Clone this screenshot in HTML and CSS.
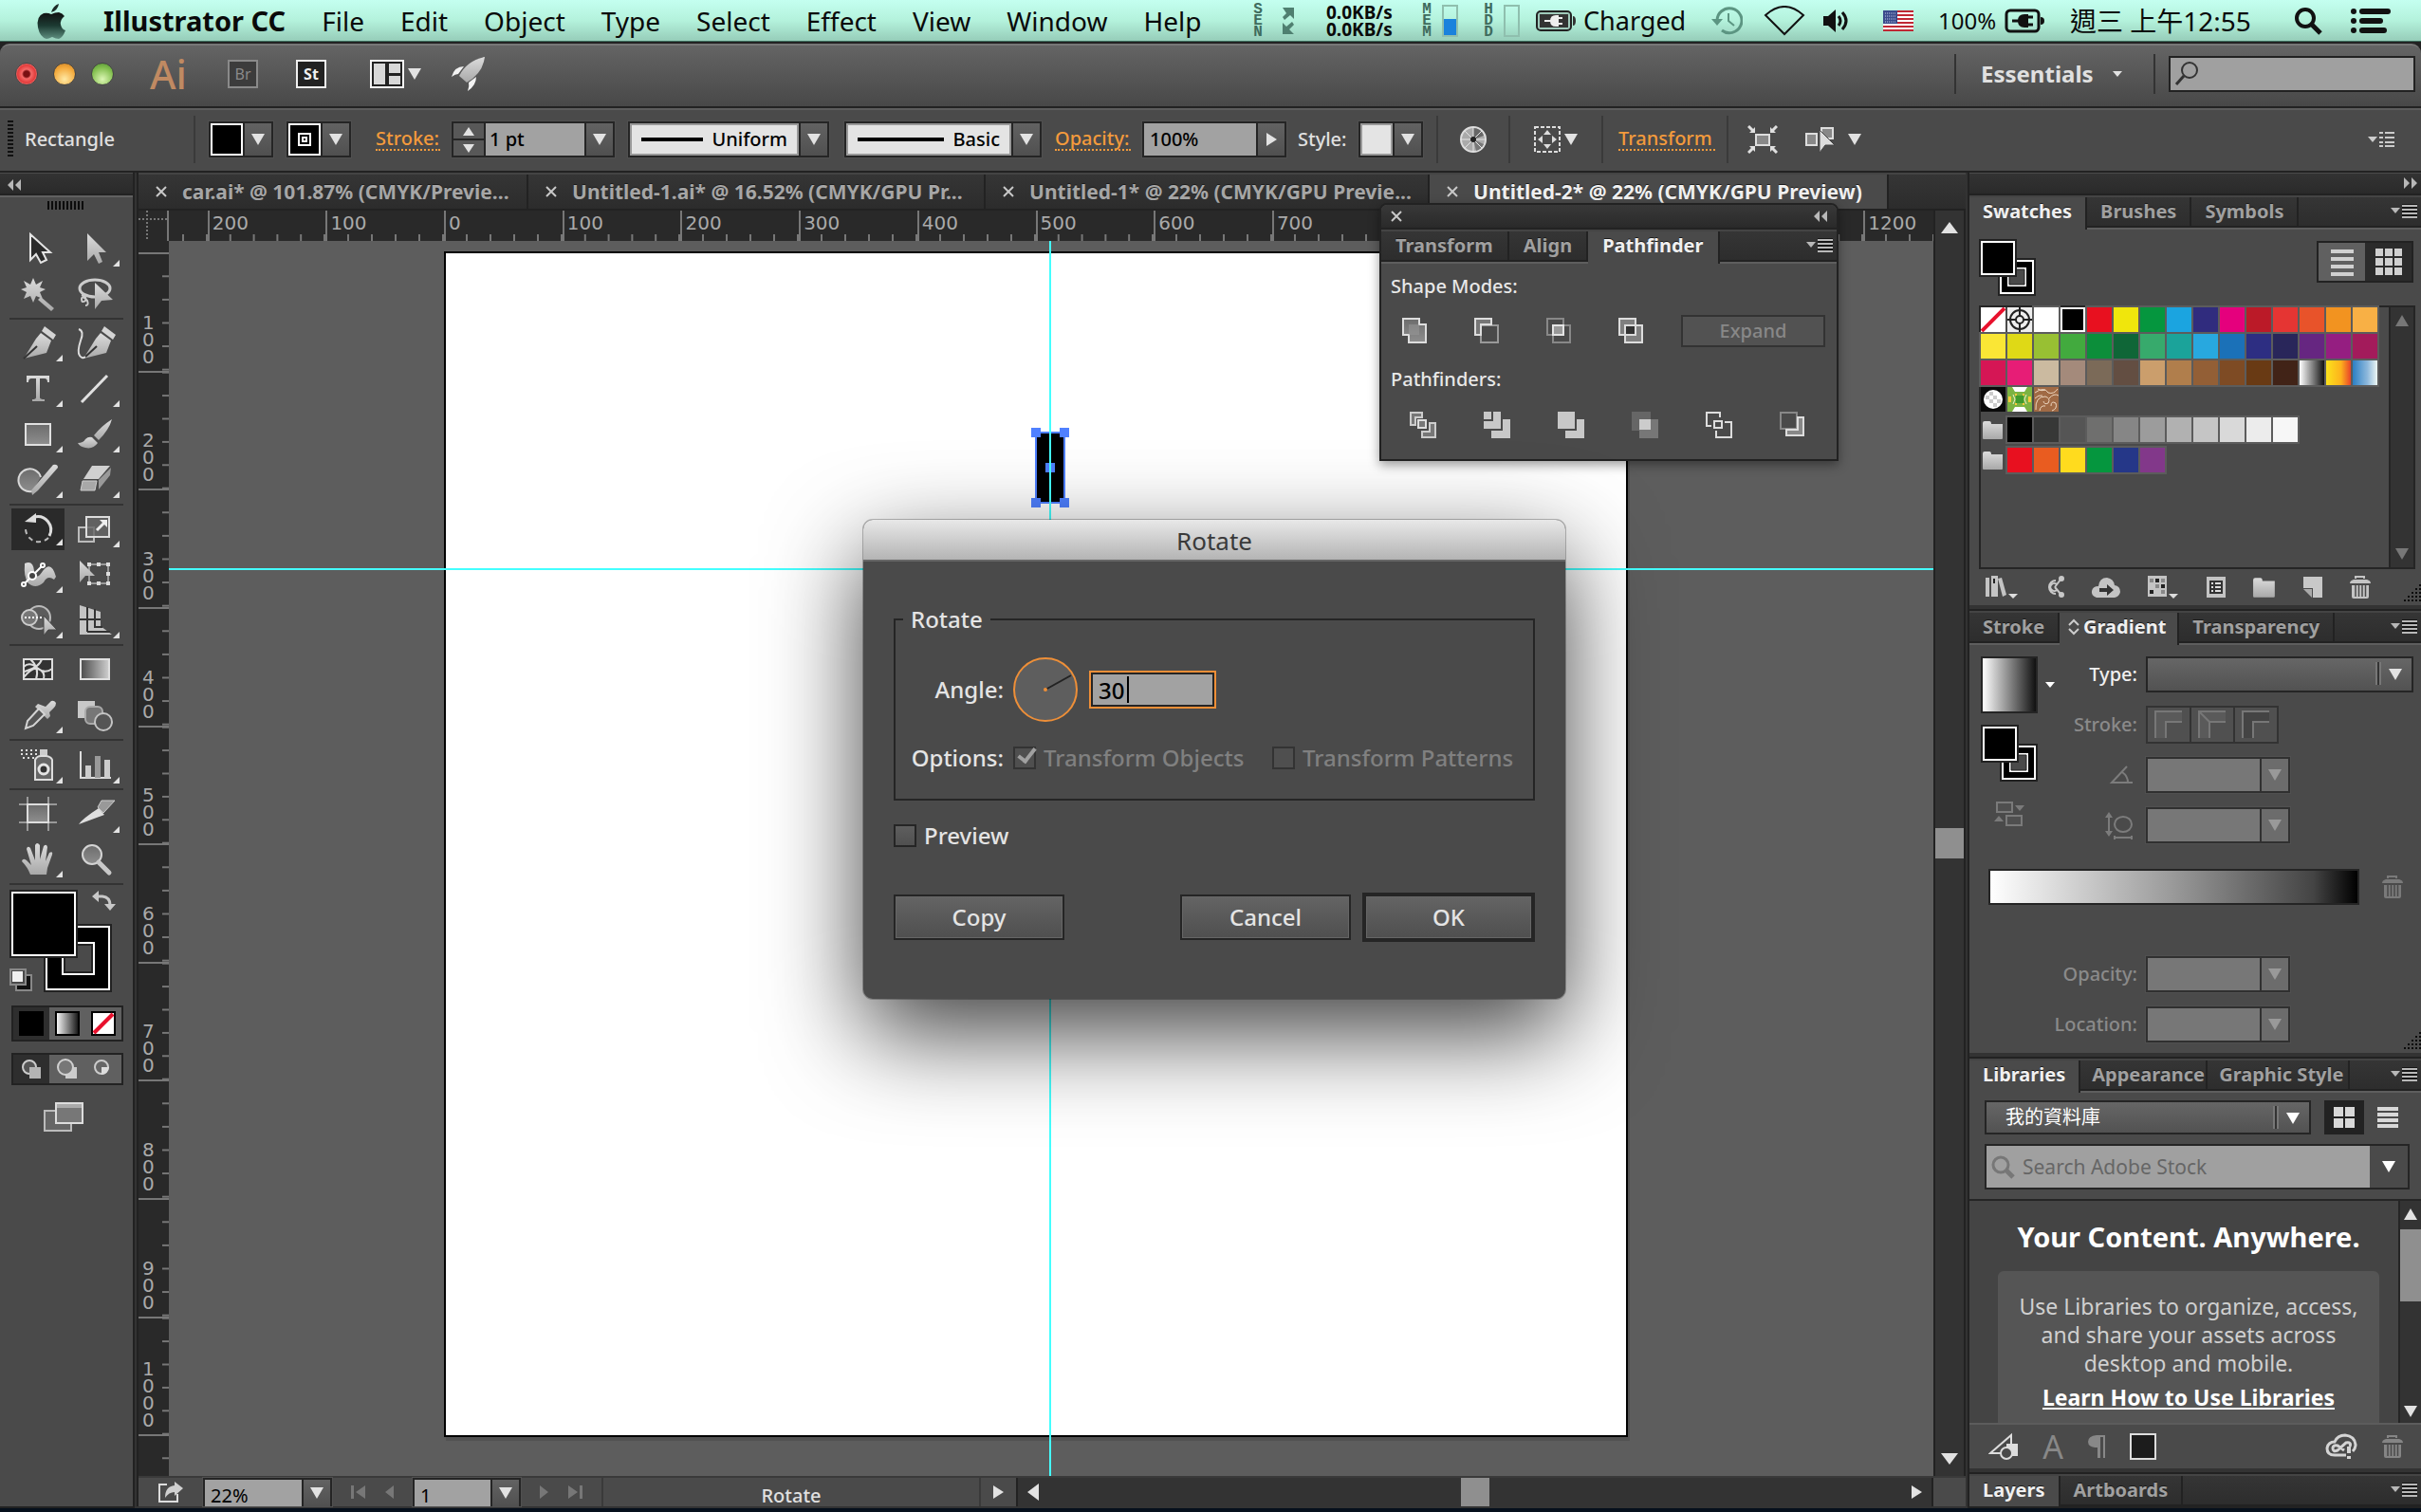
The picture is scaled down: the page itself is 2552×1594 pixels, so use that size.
FILE: index.html
```
<!DOCTYPE html>
<html lang="en">
<head>
    <meta charset="UTF-8">
    <meta name="viewport" content="width=device-width, initial-scale=1.0">
    <title>Illustrator CC</title>
    <link rel="stylesheet" href="styles.css">
</head>
<body>
    <!-- shared gradients and repeated icons -->
    <svg class="defs" aria-hidden="true">
        <defs>
            <linearGradient id="lt" x1="0" y1="0" x2="0" y2="1"><stop offset="0" stop-color="#dcdcdc"/><stop offset="1" stop-color="#a8a8a8"/></linearGradient>
            <linearGradient id="md" x1="0" y1="0" x2="0" y2="1"><stop offset="0" stop-color="#6c6c6c"/><stop offset="1" stop-color="#8e8e8e"/></linearGradient>
            <linearGradient id="bw"><stop offset="0" stop-color="#4a4a4a"/><stop offset="1" stop-color="#d0d0d0"/></linearGradient>
            <linearGradient id="wb"><stop offset="0" stop-color="#fff"/><stop offset="1" stop-color="#111"/></linearGradient>
            <linearGradient id="apple" x1="0" y1="0" x2="0" y2="1"><stop offset="0" stop-color="#111"/><stop offset="0.5" stop-color="#1c3a32"/><stop offset="1" stop-color="#5f8f80"/></linearGradient>
        </defs>
        <symbol id="i-x" viewBox="0 0 12 12"><path d="M1 1l10 10M11 1L1 11" stroke="#c8c8c8" stroke-width="2"/></symbol>
        <symbol id="i-menu" viewBox="0 0 28 16"><path d="M0 4h10l-5 6z" fill="#b8b8b8"/><path d="M12 0h16M12 4h16M12 8h16M12 12h16" stroke="#161616" stroke-width="2"/><path d="M12 2h16M12 6h16M12 10h16M12 14h16" stroke="#b8b8b8" stroke-width="2"/></symbol>
        <symbol id="i-trash" viewBox="0 0 24 26"><path d="M7 4V2h9v2" fill="none" stroke="currentColor" stroke-width="2"/><path d="M1 9q0-3 4-4h14q4 1 4 4z" fill="currentColor"/><path d="M3 11h18v12q0 2-2 2H5q-2 0-2-2z" fill="currentColor"/><path d="M7 11v12M10.500 11v12M14 11v12M17.500 11v12" stroke="#4a4a4a" stroke-width="1.500"/></symbol>
        <symbol id="i-proxy" viewBox="0 0 62 62"><path d="M20 20h40v40H20z" fill="#222"/><path d="M23 23h34v34H23zM31 31v18h18V31z" fill="#000" fill-rule="evenodd" stroke="#fff" stroke-width="2"/><path d="M32 32h16v16H32z" fill="#4a4a4a" stroke="#222" stroke-width="1"/><rect width="40" height="40" fill="#222"/><rect x="3" y="3" width="34" height="34" fill="#000" stroke="#fff" stroke-width="2"/></symbol>
        <symbol id="i-folder" viewBox="0 0 24 22"><path d="M1 20V4q0-2 2-2h5q2 0 2 3h12v15q0 1-1 1H2q-1 0-1-1z" fill="url(#lt)"/></symbol>
        <symbol id="i-grip" viewBox="0 0 18 18"><path d="M16 0h2v2h-2zM12 4h2v2h-2zM16 4h2v2h-2zM8 8h2v2H8zM12 8h2v2h-2zM16 8h2v2h-2zM4 12h2v2H4zM8 12h2v2H8zM12 12h2v2h-2zM16 12h2v2h-2zM0 16h2v2H0zM4 16h2v2H4zM8 16h2v2H8zM12 16h2v2h-2zM16 16h2v2h-2z" fill="#0c0c0c"/></symbol>
        <symbol id="i-fly" viewBox="0 0 8 8"><path d="M8 0v8H0z" fill="#e2e2e2"/></symbol>
    </svg>

    <!-- system menu bar -->
    <header class="menubar">
        <svg class="apple" width="32" height="38" viewBox="0 0 32 38"><path d="M16 10q2-7 8-9-1 7-8 9z" fill="#1c2b27"/><path d="M16 12q4-2 8-2 4 1 6 4-5 4-4 9 1 5 5 6-3 8-7 9-3 0-7-2-4 2-6 2Q4 36 2 26 0 14 8 11q4-1 8 1z" fill="url(#apple)"/></svg>
        <nav class="menus">
            <a class="app-name" href="#">Illustrator CC</a>
            <a href="#">File</a>
            <a href="#">Edit</a>
            <a href="#">Object</a>
            <a href="#">Type</a>
            <a href="#">Select</a>
            <a href="#">Effect</a>
            <a href="#">View</a>
            <a href="#">Window</a>
            <a href="#">Help</a>
        </nav>
        <div class="tray">
            <span class="vtext">S<br>E<br>N</span>
            <svg width="16" height="32" viewBox="0 0 16 32" fill="#4f7f70"><path d="M2 2h12v12l-4-4-6 5-2-3 4-4z"/><path d="M14 30H2V18l4 4 6-5 2 3-5 5z"/></svg>
            <span class="net">0.0KB/s<br>0.0KB/s</span>
            <span class="vtext">M<br>E<br>M</span>
            <span class="meter meter-mem"></span>
            <span class="vtext hdd">H<br>D<br>D</span>
            <span class="meter"></span>
            <svg class="batt" width="42" height="22" viewBox="0 0 42 22"><rect x="1" y="1" width="36" height="20" rx="4" fill="#9fc9ba" stroke="#222" stroke-width="2"/><rect x="4" y="4" width="30" height="14" fill="#333"/><path d="M39 6q3 0 3 5t-3 5z" fill="#333"/><path d="M9 11h7M28 8h-4M28 14h-4" stroke="#eee" stroke-width="2"/><path d="M24 5v12h-3q-6 0-6-6t6-6z" fill="#eee"/></svg>
            <span class="charged">Charged</span>
            <svg class="tm" width="34" height="30" viewBox="0 0 34 30" fill="none" stroke="#5c9582" stroke-width="3"><path d="M7 15a13 13 0 1 1 5 10"/><path d="M19 7v8l6 5" stroke-width="2"/><path d="M1 13h12l-6 7z" fill="#5c9582" stroke="none"/></svg>
            <svg class="wifi" width="44" height="32" viewBox="0 0 44 32" fill="none" stroke="#111" stroke-width="2"><path d="M2 10Q22-8 42 10L22 30z"/></svg>
            <svg class="vol" width="30" height="26" viewBox="0 0 30 26"><path d="M1 8h5l8-7v24l-8-7H1z" fill="#111"/><path d="M17 8q4 5 0 10M21 4q8 9 0 18" fill="none" stroke="#111" stroke-width="3"/></svg>
            <svg class="flag" width="32" height="22" viewBox="0 0 32 22"><rect width="32" height="22" fill="#fff"/><path d="M0 1h32M0 5h32M0 9h32M0 13h32M0 17h32M0 21h32" stroke="#c02734" stroke-width="2"/><rect width="15" height="14" fill="#3a4c8c"/><path d="M2 3h12M2 6h12M2 9h12M2 12h12" stroke="#c4cbe6" stroke-width="1" stroke-dasharray="1 1"/></svg>
            <span class="pct">100%</span>
            <svg class="batt2" width="42" height="26" viewBox="0 0 42 26"><rect x="2" y="2" width="34" height="22" rx="4" fill="none" stroke="#111" stroke-width="3"/><path d="M38 9q4 0 4 4t-4 4z" fill="#111"/><path d="M8 13h8M30 9h-5M30 17h-5" stroke="#111" stroke-width="3"/><path d="M25 6v14h-4q-7 0-7-7t7-7z" fill="#111"/></svg>
            <span class="clock">週三 上午12:55</span>
            <svg class="spot" width="30" height="30" viewBox="0 0 30 30" fill="none" stroke="#111"><circle cx="12" cy="12" r="9" stroke-width="4"/><path d="M19 19l9 9" stroke-width="5"/></svg>
            <svg class="list" width="42" height="28" viewBox="0 0 42 28" stroke="#111" stroke-width="6" stroke-linecap="round"><path d="M3 4h0M12 4h27M3 14h0M12 14h19M3 24h0M12 24h23"/></svg>
        </div>
    </header>

    <div class="app">
        <!-- application bar -->
        <div class="appbar">
            <button class="light red" aria-label="Close"></button>
            <button class="light amber" aria-label="Minimize"></button>
            <button class="light green" aria-label="Zoom"></button>
            <span class="ai">Ai</span>
            <button class="badge dim">Br</button>
            <button class="badge">St</button>
            <button class="bare layout" aria-label="Arrange documents">
                <svg width="36" height="30" viewBox="0 0 36 30"><rect x="1" y="1" width="34" height="28" fill="#222" stroke="#f4f4f4" stroke-width="2"/><path d="M4 4h12v22H4zM20 4h12v10H20zM20 17h12v9H20z" fill="#d8d8d8"/></svg>
                <i class="tri"></i>
            </button>
            <button class="bare" aria-label="GPU performance"><svg width="36" height="36" viewBox="0 0 36 36" fill="url(#lt)"><path d="M35 0Q16 4 8 20l8 7Q33 17 35 0z"/><path d="M7 18l6-8Q3 10 0 21q4-3 7-3zM18 27l8-6q0 9-9 15 2-5 1-9z" fill="#f2f2f2"/></svg></button>
            <div class="appbar-right">
                <button class="essentials">Essentials <i class="tri small"></i></button>
                <label class="app-search">
                    <svg width="26" height="26" viewBox="0 0 26 26" fill="none" stroke="#333" stroke-width="2"><circle cx="16" cy="9" r="8"/><path d="M10 15L2 24" stroke-width="3"/></svg>
                    <input type="text" aria-label="Search help">
                </label>
            </div>
        </div>

        <!-- control bar -->
        <div class="control">
            <i class="grip"></i>
            <span class="obj">Rectangle</span>
            <div class="combo fillbox"><button class="chip black" aria-label="Fill"></button><button class="drop" aria-label="Fill menu"><i class="tri"></i></button></div>
            <div class="combo strokebox"><button class="chip black" aria-label="Stroke color"><i class="ring"></i></button><button class="drop" aria-label="Stroke menu"><i class="tri"></i></button></div>
            <a class="link-stroke" href="#">Stroke:</a>
            <div class="combo weight">
                <div class="stepper"><button aria-label="Increase"><i class="tri up"></i></button><button aria-label="Decrease"><i class="tri"></i></button></div>
                <input type="text" value="1 pt" aria-label="Stroke weight"><button class="drop" aria-label="Weight menu"><i class="tri"></i></button>
            </div>
            <div class="combo profile"><button class="line-pick"><i></i>Uniform</button><button class="drop" aria-label="Profile menu"><i class="tri"></i></button></div>
            <div class="combo brush"><button class="line-pick"><i></i>Basic</button><button class="drop" aria-label="Brush menu"><i class="tri"></i></button></div>
            <a class="link-opacity" href="#">Opacity:</a>
            <div class="combo opacity"><input type="text" value="100%" aria-label="Opacity"><button class="drop" aria-label="Opacity slider"><i class="tri right"></i></button></div>
            <span class="style-label">Style:</span>
            <div class="combo stylebox"><button class="chip" aria-label="Graphic style"></button><button class="drop" aria-label="Style menu"><i class="tri"></i></button></div>
            <i class="sep"></i>
            <button class="bare cell-74" aria-label="Recolor artwork"><svg width="30" height="30" viewBox="0 0 30 30"><circle cx="15" cy="15" r="13" fill="#aaa" stroke="#ddd" stroke-width="2"/><path d="M15 15V3A12 12 0 0 1 26 11z" fill="#666"/><path d="M15 15L26 20A12 12 0 0 1 18 27z" fill="#777"/><path d="M15 2v26M2 15h26M6 6l18 18M24 6L6 24" stroke="#e4e4e4" stroke-width="1"/><circle cx="15" cy="15" r="3" fill="#222"/></svg></button>
            <i class="sep"></i>
            <button class="bare cell-96" aria-label="Align to"><svg width="28" height="28" viewBox="0 0 28 28"><rect x="1" y="1" width="26" height="26" fill="none" stroke="#ddd" stroke-width="2" stroke-dasharray="4 2"/><path d="M14 4l4 5h-8zM14 24l4-5h-8zM4 14l5-4v8zM24 14l-5-4v8z" fill="#ddd"/></svg><i class="tri"></i></button>
            <i class="sep"></i>
            <a class="link-transform" href="#">Transform</a>
            <i class="sep"></i>
            <button class="bare isolate" aria-label="Isolate selected object"><svg width="32" height="30" viewBox="0 0 32 30"><path d="M1 1l5 5M31 1l-5 5M1 29l5-5M31 29l-5-5" stroke="#e0e0e0" stroke-width="3"/><path d="M8 2v6H2zM24 2v6h6zM8 28v-6H2zM24 28v-6h6z" fill="#e0e0e0"/><rect x="9" y="10" width="14" height="11" fill="#888" stroke="#ddd" stroke-width="2"/></svg></button>
            <button class="bare similar" aria-label="Select similar objects"><svg width="34" height="30" viewBox="0 0 34 30"><rect x="18" y="3" width="12" height="11" fill="#888" stroke="#ddd" stroke-width="2"/><rect x="2" y="9" width="11" height="12" fill="#888" stroke="#ddd" stroke-width="2"/><path d="M16 5v24l6-8h10z" fill="#ddd" stroke="#444" stroke-width="1"/></svg><i class="tri"></i></button>
            <button class="bare control-menu" aria-label="Control menu"><svg width="28" height="18" viewBox="0 0 28 18"><path d="M0 6h10l-5 6z" fill="#ccc"/><path d="M12 2h4M12 7h4M12 12h4M12 16h4M18 2h10M18 7h10M18 12h10M18 16h10" stroke="#ccc" stroke-width="2"/></svg></button>
        </div>

        <main class="work">
            <!-- tools -->
            <aside class="tools">
                <div class="collapse"><svg width="14" height="12" viewBox="0 0 14 12" fill="#b8b8b8"><path d="M6 0v12L0 6zM14 0v12L8 6z"/></svg></div>
                <div class="tools-grip"><i></i></div>
                <div class="tool-group">
                    <button aria-label="Selection"><svg viewBox="0 0 60 48"><path d="M22 9v27l6-6 5 9 6-3-4-8h8z" fill="#2a2a2a" stroke="#e4e4e4" stroke-width="2"/></svg></button>
                    <button aria-label="Direct selection"><svg viewBox="0 0 60 48"><path d="M22 8v29l7-7 5 10 4-2-4-10h8z" fill="url(#lt)"/><use href="#i-fly" x="49" y="36" width="7" height="7"/></svg></button>
                    <button aria-label="Magic wand"><svg viewBox="0 0 60 48"><path d="M25 7l3 7 7-4-3 7 6 2-6 3 3 7-7-3-3 7-3-7-7 3 3-7-6-3 6-2-3-7 7 4zM33 27l14 12-3 3-14-12z" fill="url(#lt)"/></svg></button>
                    <button aria-label="Lasso"><svg viewBox="0 0 60 48"><ellipse cx="30" cy="18" rx="16" ry="9" fill="none" stroke="#ccc" stroke-width="3"/><path d="M16 25q6 2 4 6-4 3-4-2 1-4 6 2 2 5-2 5" fill="none" stroke="#ccc" stroke-width="2"/><path d="M30 12v28l7-9 12-1z" fill="url(#lt)"/></svg></button>
                </div>
                <div class="tool-group">
                    <button aria-label="Pen"><svg viewBox="0 0 60 48"><path d="M37 6l12 9-3 5-12-9z" fill="#d4d4d4"/><path d="M33 13l11 8-5 13-24 6 13-21z" fill="url(#lt)"/><path d="M15 40l14-13" stroke="#333" stroke-width="2"/><use href="#i-fly" x="49" y="36" width="7" height="7"/></svg></button>
                    <button aria-label="Curvature"><svg viewBox="0 0 60 48"><path d="M40 6l12 9-3 5-12-9z" fill="#d4d4d4"/><path d="M36 13l11 8-5 13-24 6 13-21z" fill="url(#lt)"/><path d="M18 40l14-13" stroke="#333" stroke-width="2"/><path d="M13 9q6 2 2 12-4 12-1 16 3 4 6 1" fill="none" stroke="#ddd" stroke-width="2"/></svg></button>
                    <button aria-label="Type"><svg viewBox="0 0 60 48"><path d="M18 10h24v7h-2q0-4-3-4h-5v20q0 2 5 2v2H24v-2q4 0 4-2V13h-5q-3 0-3 4h-2z" fill="url(#lt)"/><use href="#i-fly" x="49" y="36" width="7" height="7"/></svg></button>
                    <button aria-label="Line segment"><svg viewBox="0 0 60 48"><path d="M16 38L43 10" stroke="#e0e0e0" stroke-width="3"/><use href="#i-fly" x="49" y="36" width="7" height="7"/></svg></button>
                    <button aria-label="Rectangle"><svg viewBox="0 0 60 48"><rect x="17" y="13" width="26" height="22" fill="url(#md)" stroke="#e0e0e0" stroke-width="2"/><use href="#i-fly" x="49" y="36" width="7" height="7"/></svg></button>
                    <button aria-label="Paintbrush"><svg viewBox="0 0 60 48"><path d="M48 8q-11 7-19 17l5 5Q45 19 48 8z" fill="url(#lt)"/><path d="M27 27l6 6q-5 7-13 5-6-1-8-5 6 0 8-4 3-3 7-2z" fill="url(#lt)"/><use href="#i-fly" x="49" y="36" width="7" height="7"/></svg></button>
                    <button aria-label="Shaper"><svg viewBox="0 0 60 48"><path d="M33 21A12 12 0 1 0 24 36" fill="url(#md)" stroke="#d8d8d8" stroke-width="2"/><path d="M51 11L30 35l-6 5-1-5 23-27q5-1 5 3z" fill="url(#lt)"/><use href="#i-fly" x="49" y="36" width="7" height="7"/></svg></button>
                    <button aria-label="Eraser"><svg viewBox="0 0 60 48"><path d="M27 9h19L34 23H18z" fill="#d0d0d0"/><path d="M47 11l-1 8-12 15V24z" fill="#999"/><path d="M17 25h15l-2 10H15z" fill="#a8a8a8" stroke="#ccc" stroke-width="1"/><use href="#i-fly" x="49" y="36" width="7" height="7"/></svg></button>
                </div>
                <div class="tool-group">
                    <button class="on" aria-label="Rotate"><svg viewBox="0 0 60 48"><path d="M26 11a14 14 0 0 1 16 20" fill="none" stroke="#ddd" stroke-width="3"/><path d="M41 33a14 14 0 0 1-24-9" fill="none" stroke="#bbb" stroke-width="2" stroke-dasharray="5 4"/><path d="M16 16l12-9v10z" fill="#ddd"/><use href="#i-fly" x="49" y="34" width="7" height="7"/></svg></button>
                    <button aria-label="Scale"><svg viewBox="0 0 60 48"><rect x="13" y="22" width="16" height="15" fill="#555" stroke="#bbb" stroke-width="2"/><rect x="21" y="11" width="24" height="21" fill="#666" fill-opacity="0.800" stroke="#ddd" stroke-width="2"/><path d="M32 25l8-8" stroke="#eee" stroke-width="3"/><path d="M35 14h8v8z" fill="#eee"/><use href="#i-fly" x="49" y="36" width="7" height="7"/></svg></button>
                    <button aria-label="Width"><svg viewBox="0 0 60 48"><path d="M16 12q9-4 10 8 2 11 9 0 9-12 14 6l-2 3q-7-5-11 3-9 8-17 0-4-8-3-18z" fill="url(#lt)"/><path d="M15 34L35 14" stroke="#fff" stroke-width="2"/><circle cx="24" cy="25" r="4" fill="#444" stroke="#fff" stroke-width="2"/><circle cx="15" cy="34" r="2" fill="#444" stroke="#fff" stroke-width="2"/><circle cx="35" cy="14" r="2" fill="#444" stroke="#fff" stroke-width="2"/><use href="#i-fly" x="49" y="36" width="7" height="7"/></svg></button>
                    <button aria-label="Free transform"><svg viewBox="0 0 60 48"><rect x="24" y="13" width="20" height="20" fill="none" stroke="#999" stroke-width="2"/><path d="M22 11h4v4h-4zM32 11h4v4h-4zM42 11h4v4h-4zM42 21h4v4h-4zM42 31h4v4h-4zM32 31h4v4h-4zM22 31h4v4h-4z" fill="#ddd"/><path d="M14 9v23l6-7h10z" fill="url(#lt)"/></svg></button>
                    <button aria-label="Shape builder"><svg viewBox="0 0 60 48"><circle cx="31" cy="21" r="12" fill="#5c5c5c" stroke="#bbb" stroke-width="2"/><circle cx="21" cy="21" r="8" fill="#777" stroke="#ccc" stroke-width="2"/><path d="M16 21h18" stroke="#fff" stroke-width="2" stroke-dasharray="2 2"/><path d="M36 19v21l5-6h9z" fill="url(#lt)" stroke="#444" stroke-width="1"/><use href="#i-fly" x="49" y="36" width="7" height="7"/></svg></button>
                    <button aria-label="Perspective grid"><svg viewBox="0 0 60 48"><path d="M14 8l22 7v15l12 9H14z" fill="#c4c4c4"/><path d="M22 10v26M30 12v20M14 23h22M22 36h24M30 31h8" stroke="#333" stroke-width="2"/><use href="#i-fly" x="49" y="36" width="7" height="7"/></svg></button>
                </div>
                <div class="tool-group">
                    <button aria-label="Mesh"><svg viewBox="0 0 60 48"><rect x="15" y="13" width="30" height="21" fill="#333" stroke="#ddd" stroke-width="2"/><path d="M15 21q6-6 14 1t16 1M15 32q9-11 15-9 8 3 6 11M22 13q10 9 6 21M34 13q-2 8-18 13" fill="none" stroke="#ddd" stroke-width="2"/></svg></button>
                    <button aria-label="Gradient"><svg viewBox="0 0 60 48"><rect x="15" y="13" width="30" height="21" fill="url(#bw)" stroke="#e0e0e0" stroke-width="2"/></svg></button>
                    <button aria-label="Eyedropper"><svg viewBox="0 0 60 48"><path d="M38 15l6-6q3-1 5 2 0 3-2 5l-5 5 1 4-3 3-13-13 3-3z" fill="url(#lt)"/><path d="M31 17L19 30l-2 8 8-3 12-12z" fill="#555" stroke="#d4d4d4" stroke-width="2"/><use href="#i-fly" x="49" y="36" width="7" height="7"/></svg></button>
                    <button aria-label="Blend"><svg viewBox="0 0 60 48"><path d="M12 9h18v18H12z" fill="#c8c8c8"/><rect x="20" y="15" width="18" height="18" rx="5" fill="#777" stroke="#aaa" stroke-width="2"/><circle cx="39" cy="31" r="9" fill="#555" stroke="#c4c4c4" stroke-width="2"/></svg></button>
                </div>
                <div class="tool-group">
                    <button aria-label="Symbol sprayer"><svg viewBox="0 0 60 48"><path d="M12 9h18M12 13h18M14 17h16" stroke="#ddd" stroke-width="2" stroke-dasharray="2 3"/><path d="M32 8h8v6h-8z" fill="#ccc"/><path d="M27 19q2-4 6-4h6q5 1 6 4v21H27z" fill="#666" stroke="#ddd" stroke-width="2"/><circle cx="36" cy="29" r="5" fill="#333" stroke="#e4e4e4" stroke-width="3"/><use href="#i-fly" x="49" y="37" width="7" height="7"/></svg></button>
                    <button aria-label="Column graph"><svg viewBox="0 0 60 48"><path d="M15 10v28h32" fill="none" stroke="#ddd" stroke-width="2"/><path d="M20 25h6v13h-6zM40 19h6v19h-6z" fill="#ccc"/><path d="M30 15h6v23h-6z" fill="#999"/><use href="#i-fly" x="49" y="37" width="7" height="7"/></svg></button>
                </div>
                <div class="tool-group">
                    <button aria-label="Artboard"><svg viewBox="0 0 60 48"><path d="M10 14h40M10 33h40M19 6v36M41 6v36" stroke="#999" stroke-width="2"/><rect x="19" y="14" width="22" height="19" fill="url(#md)" stroke="#ddd" stroke-width="2"/></svg></button>
                    <button aria-label="Slice"><svg viewBox="0 0 60 48"><path d="M34 18l6 7L13 35q4-6 21-17z" fill="#e0e0e0"/><path d="M37 10h14L39 23l-6-6z" fill="#999" stroke="#ccc" stroke-width="1"/><use href="#i-fly" x="49" y="37" width="7" height="7"/></svg></button>
                    <button aria-label="Hand"><svg viewBox="0 0 60 48"><path d="M22 40q-3-8-9-14 1-4 5-1l5 5-5-17q1-4 4-1l5 13V9q2-4 5 0v15l4-14q3-3 4 1l-2 15 4-9q4-2 3 2l-5 14-1 7z" fill="url(#lt)"/><use href="#i-fly" x="49" y="36" width="7" height="7"/></svg></button>
                    <button aria-label="Zoom"><svg viewBox="0 0 60 48"><circle cx="27" cy="19" r="10" fill="url(#md)" stroke="#d4d4d4" stroke-width="2"/><path d="M34 27l11 11" stroke="#c8c8c8" stroke-width="5" stroke-linecap="round"/></svg></button>
                </div>
                <div class="paint">
                    <svg width="120" height="112" viewBox="0 0 120 112">
                        <path d="M36 36h72v72H36z" fill="#222"/><path d="M39 39h66v66H39zM56 56v33h33V56z" fill="#000" stroke="#fff" stroke-width="2" fill-rule="evenodd"/><path d="M58 58h29v29H58z" fill="#4a4a4a" stroke="#222" stroke-width="2"/>
                        <rect width="72" height="72" fill="#222"/><rect x="3" y="3" width="66" height="66" fill="#000" stroke="#fff" stroke-width="2"/>
                        <path d="M94 7h4q8 1 8 9" fill="none" stroke="#c8c8c8" stroke-width="3"/><path d="M87 7l7-6v12zM100 15h12l-6 7z" fill="#c8c8c8"/>
                        <rect x="7" y="90" width="16" height="16" fill="#111" stroke="#888" stroke-width="2"/><rect x="1" y="84" width="16" height="16" fill="#4a4a4a" stroke="#888" stroke-width="2"/><path d="M3 86h11v11H3z" fill="#f0f0f0"/>
                    </svg>
                </div>
                <div class="modes">
                    <button class="on" aria-label="Color"><svg width="26" height="26" viewBox="0 0 26 26"><path d="M0 0h26v26H0z"/></svg></button>
                    <button aria-label="Gradient fill"><svg width="26" height="26" viewBox="0 0 26 26"><rect x="1" y="1" width="24" height="24" fill="url(#wb)" stroke="#000" stroke-width="2"/></svg></button>
                    <button aria-label="None"><svg width="26" height="26" viewBox="0 0 26 26"><rect x="1" y="1" width="24" height="24" fill="#fff" stroke="#000" stroke-width="2"/><path d="M3 23L23 3" stroke="#e8112d" stroke-width="4"/></svg></button>
                </div>
                <div class="modes draw">
                    <button class="on" aria-label="Draw normal"><svg width="22" height="22" viewBox="0 0 22 22"><circle cx="9" cy="9" r="7" fill="#555" stroke="#ccc" stroke-width="2"/><path d="M9 9h12v12H9z" fill="#b4b4b4"/></svg></button>
                    <button aria-label="Draw behind"><svg width="22" height="22" viewBox="0 0 22 22"><path d="M9 9h12v12H9z" fill="#ccc"/><circle cx="9" cy="9" r="8" fill="#777" stroke="#d0d0d0" stroke-width="2"/></svg></button>
                    <button aria-label="Draw inside"><svg width="22" height="22" viewBox="0 0 22 22"><circle cx="9" cy="9" r="7" fill="#666" stroke="#ccc" stroke-width="2"/><path d="M9 9h8q-1 7-8 8z" fill="#ddd"/></svg></button>
                </div>
                <button class="screen" aria-label="Screen mode"><svg width="42" height="34" viewBox="0 0 42 34"><rect x="1" y="11" width="28" height="21" fill="#666" stroke="#bbb" stroke-width="2"/><rect x="13" y="3" width="28" height="21" fill="#777" stroke="#ddd" stroke-width="2"/><path d="M14 4h26v4H14z" fill="#aaa"/></svg></button>
            </aside>

            <!-- document window -->
            <section class="doc">
                <div class="doctabs">
                    <div class="doctab t1"><button aria-label="Close tab"><svg width="12" height="12"><use href="#i-x"/></svg></button><span>car.ai* @ 101.87% (CMYK/Previe...</span></div>
                    <div class="doctab t2"><button aria-label="Close tab"><svg width="12" height="12"><use href="#i-x"/></svg></button><span>Untitled-1.ai* @ 16.52% (CMYK/GPU Pr...</span></div>
                    <div class="doctab t3"><button aria-label="Close tab"><svg width="12" height="12"><use href="#i-x"/></svg></button><span>Untitled-1* @ 22% (CMYK/GPU Previe...</span></div>
                    <div class="doctab t4 active"><button aria-label="Close tab"><svg width="12" height="12"><use href="#i-x"/></svg></button><span>Untitled-2* @ 22% (CMYK/GPU Preview)</span></div>
                </div>
                <div class="view">
                    <div class="view-main">
                        <div class="hruler">
                            <div class="corner"></div>
                            <div class="hscale"><div class="hticks"><i></i><i>200</i><i>100</i><i>0</i><i>100</i><i>200</i><i>300</i><i>400</i><i>500</i><i>600</i><i>700</i><i></i><i></i><i></i><i></i><i>1200</i></div></div>
                        </div>
                        <div class="stage">
                            <div class="vruler">
                                <div class="vzero"></div>
                                <div class="vticks">
                                    <i>1<br>0<br>0</i><i>2<br>0<br>0</i><i>3<br>0<br>0</i><i>4<br>0<br>0</i><i>5<br>0<br>0</i><i>6<br>0<br>0</i><i>7<br>0<br>0</i><i>8<br>0<br>0</i><i>9<br>0<br>0</i><i>1<br>0<br>0<br>0</i><i></i>
                                </div>
                            </div>
                            <div class="canvas">
                                <div class="artboard"></div>
                                <div class="shape"><i class="h tl"></i><i class="h tr"></i><i class="h bl"></i><i class="h br"></i><i class="h mid"></i></div>
                                <div class="guide-v"></div>
                                <div class="guide-h"></div>
                            </div>
                        </div>
                    </div>
                    <div class="vscroll"><i class="tri up big"></i><i class="thumb"></i><i class="tri big"></i></div>
                </div>
                <div class="status">
                    <button class="bare share" aria-label="Share"><svg width="28" height="24" viewBox="0 0 28 24"><path d="M10 4H2v18h19v-8" fill="none" stroke="#ddd" stroke-width="2"/><path d="M18 1l9 7-9 8v-4q-6 0-10 6 0-12 10-13z" fill="#d0d0d0"/></svg></button>
                    <div class="combo flat zoom"><input type="text" value="22%" aria-label="Zoom level"><button class="drop" aria-label="Zoom menu"><i class="tri"></i></button></div>
                    <div class="pager">
                        <svg width="46" height="14" viewBox="0 0 46 14" fill="#777"><path d="M0 0h3v14H0zM15 0v14L5 7zM45 0v14l-9-7z"/></svg>
                    </div>
                    <div class="combo flat page"><input type="text" value="1" aria-label="Artboard number"><button class="drop" aria-label="Artboard menu"><i class="tri"></i></button></div>
                    <div class="pager">
                        <svg width="46" height="14" viewBox="0 0 46 14" fill="#777"><path d="M0 0l9 7-9 7zM30 0l10 7-10 7zM42 0h3v14h-3z"/></svg>
                    </div>
                    <span class="status-text">Rotate</span>
                    <button class="bare status-more" aria-label="Status menu"><i class="tri right"></i></button>
                    <div class="hscroll"><i class="tri left"></i><i class="thumb"></i><i class="tri right"></i></div>
                    <i class="resize"></i>
                </div>
            </section>

            <!-- panel dock -->
            <aside class="dock">
                <div class="collapse right"><svg width="14" height="12" viewBox="0 0 14 12" fill="#b8b8b8"><path d="M0 0v12l6-6zM8 0v12l6-6z"/></svg></div>
                <section class="panel swatches">
                    <div class="tabs"><button class="active">Swatches</button><button>Brushes</button><button>Symbols</button><svg class="pmenu" width="28" height="16"><use href="#i-menu"/></svg></div>
                    <div class="sw-top">
                        <svg width="60" height="60" viewBox="0 0 60 60"><use href="#i-proxy" width="62" height="62"/></svg>
                        <div class="viewpick">
                            <button aria-label="List view"><svg width="24" height="30" viewBox="0 0 24 30"><path d="M0 4h24M0 12h24M0 20h24M0 28h24" stroke="#d0d0d0" stroke-width="4"/></svg></button>
                            <button class="on" aria-label="Thumbnail view"><svg width="28" height="28" viewBox="0 0 28 28" fill="#d0d0d0"><path d="M0 0h8v8H0zM10 0h8v8h-8zM20 0h8v8h-8zM0 10h8v8H0zM10 10h8v8h-8zM20 10h8v8h-8zM0 20h8v8H0zM10 20h8v8h-8zM20 20h8v8h-8z"/></svg></button>
                        </div>
                    </div>
                    <div class="sw-box">
                        <div class="sw-list">
                            <div class="sw-row">
                                <svg width="26" height="26" viewBox="0 0 26 26"><path d="M0 0h26v26H0z" fill="#fff"/><path d="M1 25L25 1" stroke="#e8112d" stroke-width="4"/></svg>
                                <svg width="26" height="26" viewBox="0 0 26 26" fill="none" stroke="#222" stroke-width="2"><path d="M0 0h26v26H0z" fill="#eee" stroke="none"/><circle cx="13" cy="13" r="10"/><circle cx="13" cy="13" r="4"/><path d="M13 0v9M13 17v9M0 13h9M17 13h9"/></svg>
                                <i style="background:#fff"></i><i class="picked" style="background:#000"></i><i style="background:#e8101f"></i><i style="background:#f0e60c"></i><i style="background:#05963e"></i><i style="background:#1ba4e0"></i><i style="background:#302c7e"></i><i style="background:#e5007d"></i><i style="background:#bb1a28"></i><i style="background:#e53533"></i><i style="background:#e8532a"></i><i style="background:#f29320"></i><i style="background:#f8b045"></i>
                                <i style="background:#fae635"></i><i style="background:#dfd916"></i><i style="background:#98c033"></i><i style="background:#42aa3e"></i><i style="background:#0c8e3a"></i><i style="background:#0f6637"></i><i style="background:#37aa6c"></i><i style="background:#1ba39a"></i><i style="background:#28a8df"></i><i style="background:#1b71b8"></i><i style="background:#2d2e82"></i><i style="background:#29265a"></i><i style="background:#662681"></i><i style="background:#951e81"></i><i style="background:#a31b5b"></i>
                                <i style="background:#d51655"></i><i style="background:#e71d76"></i><i style="background:#cbbaa0"></i><i style="background:#a48a7b"></i><i style="background:#7b6a58"></i><i style="background:#634e42"></i><i style="background:#cb9e6c"></i><i style="background:#b07e4c"></i><i style="background:#935f36"></i><i style="background:#7e4b24"></i><i style="background:#693a14"></i><i style="background:#412317"></i><i style="background:linear-gradient(90deg,#fff,#111)"></i><i style="background:linear-gradient(90deg,#fbe21c,#fdb21c 60%,#e8432a)"></i><i style="background:linear-gradient(90deg,#2b7fc4,#8fb9dc 60%,#eef7f3)"></i>
                                <svg width="26" height="26" viewBox="0 0 26 26"><path d="M0 0h26v26H0z" fill="#0a0a0a"/><circle cx="13" cy="13" r="10" fill="#fff"/><path d="M9 5h4v4H9zM5 9h4v4H5zM13 9h4v4h-4zM9 13h4v4H9zM17 13h4v4h-4zM13 17h4v4h-4z" fill="#ccc"/></svg>
                                <svg width="26" height="26" viewBox="0 0 26 26"><path d="M0 0h26v26H0z" fill="#7cb342"/><path d="M5 0h16l-3 5H8zM5 26h16l-3-5H8z" fill="#fff"/><path d="M6 8l2 5-2 5M20 8l-2 5 2 5" stroke="#e8f0d0" fill="none" stroke-width="1"/><path d="M9 9h8v8H9z" fill="#3f9a2c"/><path d="M1 10h3v6H1zM22 10h3v6h-3zM8 7h2v2H8zM16 7h2v2h-2zM8 17h2v2H8zM16 17h2v2h-2z" fill="#ffc83c"/></svg>
                                <svg width="26" height="26" viewBox="0 0 26 26" fill="none" stroke="#ecd6c0" stroke-width="1"><path d="M0 0h26v26H0z" fill="#a06a45" stroke="none"/><path d="M2 24Q1 10 12 10q6 2 3 7-4 2-5-2M1 6q10-7 14 0 6 2 10-4M19 25q6-2 4-8-5-3-5 3M1 12q4-4 8-3M16 12q5-6 10-3M6 25q1-6 6-5M4 2q4 3 8 1"/></svg>
                            </div>
                            <div class="sw-row group">
                                <svg width="26" height="26" viewBox="0 0 26 26"><path d="M0 0h26v26H0z" fill="#4a4a4a"/><use href="#i-folder" x="1" y="2" width="24" height="22"/></svg>
                                <i style="background:#000"></i><i style="background:#373837"></i><i style="background:#555"></i><i style="background:#6f6f6e"></i><i style="background:#868686"></i><i style="background:#9c9c9c"></i><i style="background:#b1b1b1"></i><i style="background:#c5c5c5"></i><i style="background:#d9d9d9"></i><i style="background:#ececec"></i><i style="background:#f7f7f7"></i>
                            </div>
                            <div class="sw-row group">
                                <svg width="26" height="26" viewBox="0 0 26 26"><path d="M0 0h26v26H0z" fill="#4a4a4a"/><use href="#i-folder" x="1" y="2" width="24" height="22"/></svg>
                                <i style="background:#e8101f"></i><i style="background:#e95c20"></i><i style="background:#ffdb1e"></i><i style="background:#05963e"></i><i style="background:#253788"></i><i style="background:#82388a"></i>
                            </div>
                        </div>
                        <div class="sw-scroll"><i class="tri up"></i><i class="tri"></i></div>
                    </div>
                    <div class="icons sw-icons">
                        <button aria-label="Swatch libraries"><svg width="36" height="26" viewBox="0 0 36 26"><path d="M1 3h4v20H1zM7 1h7v22H7zM14 4l4-1 5 18-4 2z" fill="#c4c4c4"/><path d="M9 4h2v5H9z" fill="#222"/><path d="M25 20h10l-5 5z" fill="#ddd"/></svg></button>
                        <button aria-label="Color themes"><svg width="22" height="26" viewBox="0 0 22 26" fill="none" stroke="#c8c8c8" stroke-width="2"><path d="M12 6a7 7 0 1 0 0 14M13 10a4 4 0 1 0 0 6"/><path d="M11 13l6-8M11 13l6 7"/><circle cx="18" cy="4" r="2" fill="#c8c8c8"/><circle cx="18" cy="21" r="2" fill="#c8c8c8"/></svg></button>
                        <button aria-label="Add to library"><svg width="32" height="24" viewBox="0 0 32 24"><path d="M6 23q-6-2-5-7 1-5 7-5Q9 2 17 2q7 1 8 8 6 1 6 7-1 5-6 6z" fill="#c4c4c4"/><path d="M9 13h8v-4l7 6-7 6v-4H9z" fill="#333"/></svg></button>
                        <button aria-label="Swatch kinds"><svg width="34" height="26" viewBox="0 0 34 26"><path d="M1 1h20v22H1z" fill="#c4c4c4"/><path d="M3 4h4v4H3zM9 10h4v4H9z" fill="#888"/><path d="M9 4h4v4H9zM3 16h4v4H3zM15 10h4v4h-4z" fill="#222"/><path d="M15 4h4v4h-4zM15 16h4v4h-4z" fill="#888"/><path d="M23 20h10l-5 5z" fill="#ddd"/></svg></button>
                        <button aria-label="Swatch options"><svg width="22" height="24" viewBox="0 0 22 24"><path d="M1 1h20v22H1z" fill="#c4c4c4"/><path d="M4 5h14v14H4z" fill="#333"/><path d="M6 8h2M10 8h6M6 12h2M10 12h6M6 16h2M10 16h6" stroke="#ddd" stroke-width="2"/></svg></button>
                        <button aria-label="New color group"><svg width="26" height="24"><use href="#i-folder"/></svg></button>
                        <button aria-label="New swatch"><svg width="22" height="24" viewBox="0 0 22 24"><path d="M1 1h20v22H11V13H1z" fill="#c8c8c8"/><path d="M1 14h9v9z" fill="#aaa"/></svg></button>
                        <button aria-label="Delete swatch"><svg width="24" height="26" color="#c4c4c4"><use href="#i-trash"/></svg></button>
                    </div>
                    <svg class="corner-grip" width="18" height="18"><use href="#i-grip"/></svg>
                </section>

                <section class="panel gradient">
                    <div class="tabs"><button>Stroke</button><button class="active updown"><svg width="12" height="18" viewBox="0 0 12 18"><path d="M1 7l5-5 5 5M1 11l5 5 5-5" fill="none" stroke="#ccc" stroke-width="2"/></svg>Gradient</button><button>Transparency</button><svg class="pmenu" width="28" height="16"><use href="#i-menu"/></svg></div>
                    <div class="grad-body">
                        <div class="grad-left">
                            <div class="grad-pick"><button class="grad-thumb" aria-label="Gradient preset"></button><i class="tri small white"></i></div>
                            <svg width="60" height="60" viewBox="0 0 60 60"><use href="#i-proxy" width="62" height="62"/></svg>
                            <svg class="reverse" width="32" height="28" viewBox="0 0 32 28"><rect x="3" y="2" width="16" height="10" fill="#4f4f4f" stroke="#7a7a7a" stroke-width="2"/><rect x="13" y="16" width="16" height="10" fill="#4f4f4f" stroke="#7a7a7a" stroke-width="2"/><path d="M22 5h10l-5 6zM0 22h10l-5-6z" fill="#7a7a7a"/></svg>
                        </div>
                        <div class="grad-form">
                            <label class="lit" for="gtype">Type:</label>
                            <div class="pick"><select id="gtype"><option></option></select><i class="bars"></i><i class="tri"></i></div>
                            <span class="name">Stroke:</span>
                            <div class="trio"><button disabled aria-label="Within stroke"><svg width="30" height="30" viewBox="0 0 30 30"><path d="M1 29V1h28v11H12v17z" fill="#5a5a5a"/><path d="M1 29V1h28M12 29V12h17" fill="none" stroke="#777" stroke-width="2"/></svg></button><button disabled aria-label="Along stroke"><svg width="30" height="30" viewBox="0 0 30 30"><path d="M1 29V1h28v11H12v17z" fill="#5a5a5a"/><path d="M1 29V1h28M12 29V12h17M1 1l11 11" fill="none" stroke="#777" stroke-width="2"/></svg></button><button disabled aria-label="Across stroke"><svg width="30" height="30" viewBox="0 0 30 30"><path d="M1 29V1h28v11H12v17z" fill="#444"/><path d="M1 29V1h28M12 29V12h17" fill="none" stroke="#777" stroke-width="2"/></svg></button></div>
                            <label class="pic" for="gangle"><svg width="26" height="22" viewBox="0 0 26 22" fill="none" stroke="#7c7c7c" stroke-width="2"><path d="M19 2L3 19h22M14 8q6 4 6 11"/></svg></label>
                            <div class="combo off"><input id="gangle" type="text" disabled><button class="drop" disabled aria-label="Angle menu"><i class="tri"></i></button></div>
                            <label class="pic" for="gratio"><svg width="30" height="30" viewBox="0 0 30 30" fill="none" stroke="#7c7c7c" stroke-width="2"><path d="M4 4v20M10 26v4M28 26v4M10 28h18"/><ellipse cx="19" cy="14" rx="9" ry="8"/><path d="M0 7l4-6 4 6zM0 21l4 6 4-6z" fill="#7c7c7c" stroke="none"/></svg></label>
                            <div class="combo off"><input id="gratio" type="text" disabled><button class="drop" disabled aria-label="Ratio menu"><i class="tri"></i></button></div>
                        </div>
                    </div>
                    <div class="grad-bar"><i></i><svg width="24" height="26" color="#7a7a7a"><use href="#i-trash"/></svg></div>
                    <div class="grad-form lower">
                        <label for="gop">Opacity:</label>
                        <div class="combo off"><input id="gop" type="text" disabled><button class="drop" disabled aria-label="Opacity menu"><i class="tri"></i></button></div>
                        <label for="gloc">Location:</label>
                        <div class="combo off"><input id="gloc" type="text" disabled><button class="drop" disabled aria-label="Location menu"><i class="tri"></i></button></div>
                    </div>
                    <svg class="corner-grip" width="18" height="18"><use href="#i-grip"/></svg>
                </section>

                <section class="panel libraries">
                    <div class="tabs"><button class="active">Libraries</button><button class="cut-a">Appearance</button><button class="cut-b">Graphic Style</button><svg class="pmenu" width="28" height="16"><use href="#i-menu"/></svg></div>
                    <div class="lib-row">
                        <div class="pick lib"><select aria-label="Library"><option>我的資料庫</option></select><i class="bars"></i><i class="tri white"></i></div>
                        <button class="lib-grid" aria-label="Grid view"><svg width="22" height="22" viewBox="0 0 22 22" fill="#d8d8d8"><path d="M0 0h10v10H0zM12 0h10v10H12zM0 12h10v10H0zM12 12h10v10H12z"/></svg></button>
                        <button class="bare lib-list" aria-label="List view"><svg width="22" height="22" viewBox="0 0 22 22"><path d="M0 2h22M0 8h22M0 14h22M0 20h22" stroke="#d8d8d8" stroke-width="4"/></svg></button>
                    </div>
                    <div class="lib-search">
                        <svg width="26" height="26" viewBox="0 0 26 26" fill="none" stroke="#777"><circle cx="11" cy="11" r="8" stroke-width="3"/><path d="M17 17l7 7" stroke-width="5"/></svg>
                        <input type="text" placeholder="Search Adobe Stock" aria-label="Search Adobe Stock">
                        <button aria-label="Search source"><i class="tri white"></i></button>
                    </div>
                    <div class="lib-body">
                        <div class="lib-content">
                            <h2>Your Content. Anywhere.</h2>
                            <div class="card"><p>Use Libraries to organize, access, and share your assets across desktop and mobile.</p><a href="#">Learn How to Use Libraries</a></div>
                        </div>
                        <div class="lib-scroll"><i class="tri up"></i><i class="thumb"></i><i class="tri"></i></div>
                    </div>
                    <div class="icons lib-icons">
                        <button aria-label="Add graphic"><svg width="32" height="30" viewBox="0 0 32 30"><path d="M2 22L24 3v19z" fill="none" stroke="#ddd" stroke-width="2"/><path d="M19 12h12v13H19z" fill="#ddd"/><circle cx="19" cy="22" r="6" fill="#4a4a4a" stroke="#ddd" stroke-width="2"/></svg></button>
                        <button class="glyph">A</button>
                        <button aria-label="Paragraph style"><svg width="20" height="26" viewBox="0 0 20 26" fill="#888"><path d="M10 1h9v24h-2V3h-3v22h-3V14Q1 14 1 8t9-7z"/></svg></button>
                        <button aria-label="Add fill color"><svg width="28" height="28" viewBox="0 0 28 28"><rect x="1" y="1" width="26" height="26" fill="#1c1c1c" stroke="#ddd" stroke-width="2"/></svg></button>
                        <button class="cc" aria-label="Creative Cloud status"><svg width="34" height="28" viewBox="0 0 34 28" fill="none" stroke="#d4d4d4" stroke-width="3"><path d="M22 23H10q-8 0-8-7 1-7 8-7 3-7 11-7 10 1 11 10 0 4-3 7"/><path d="M20 18l-7-5q-5-1-5 3t5 2l9-8q6-1 4 4"/><path d="M25 14v7M25 24v3" stroke-width="4"/></svg></button>
                        <button aria-label="Delete item"><svg width="24" height="26" color="#858585"><use href="#i-trash"/></svg></button>
                    </div>
                </section>

                <section class="panel layers">
                    <div class="tabs"><button class="active">Layers</button><button>Artboards</button><svg class="pmenu" width="28" height="16"><use href="#i-menu"/></svg></div>
                </section>
            </aside>
        </main>
    </div>

    <!-- floating pathfinder panel -->
    <section class="pathfinder">
        <div class="float-head"><button class="bare" aria-label="Close panel"><svg width="12" height="12"><use href="#i-x"/></svg></button><svg width="14" height="12" viewBox="0 0 14 12" fill="#b8b8b8"><path d="M6 0v12L0 6zM14 0v12L8 6z"/></svg></div>
        <div class="tabs"><button>Transform</button><button>Align</button><button class="active">Pathfinder</button><svg class="pmenu" width="28" height="16"><use href="#i-menu"/></svg></div>
        <div class="pf-body">
            <p>Shape Modes:</p>
            <div class="pf-modes">
                <button aria-label="Unite"><svg width="26" height="28" viewBox="0 0 26 28"><path d="M1 1h17v6h7v19H7v-8H1z" fill="url(#md)" stroke="#ddd" stroke-width="2"/><path d="M7 7h11v11H7z" fill="#999" fill-opacity="0.500"/></svg></button>
                <button aria-label="Minus front"><svg width="26" height="28" viewBox="0 0 26 28"><path d="M7 8h18v18H7z" fill="none" stroke="#999" stroke-width="2"/><path d="M1 1h17v6H7v11H1z" fill="#777" stroke="#ddd" stroke-width="2"/></svg></button>
                <button aria-label="Intersect"><svg width="26" height="28" viewBox="0 0 26 28"><path d="M1 1h17v17H1zM7 8h18v18H7z" fill="none" stroke="#888" stroke-width="2"/><path d="M7 8h11v10H7z" fill="#999" stroke="#e4e4e4" stroke-width="2"/></svg></button>
                <button aria-label="Exclude"><svg width="26" height="28" viewBox="0 0 26 28"><path d="M1 1h17v17H1zM7 8h18v18H7z" fill="#808080" stroke="#ddd" stroke-width="2"/><path d="M7 8h11v10H7z" fill="#333" stroke="#ddd" stroke-width="2"/></svg></button>
                <button class="expand" disabled>Expand</button>
            </div>
            <p>Pathfinders:</p>
            <div class="pf-ops">
                <button aria-label="Divide"><svg width="28" height="30" viewBox="0 0 28 30"><path d="M1 3h12v5H6v8H1zM27 14v15H13v-6h8v-9z" fill="#777" stroke="#ccc" stroke-width="2"/><path d="M9 11h8v8H9z" fill="#777" stroke="#ddd" stroke-width="2"/></svg></button>
                <button aria-label="Trim"><svg width="28" height="30" viewBox="0 0 28 30" fill="#c8c8c8"><path d="M0 2h8v8H0zM10 2h8v18H0v-8h10zM20 10h8v20H8v-8h12z"/></svg></button>
                <button aria-label="Merge"><svg width="28" height="30" viewBox="0 0 28 30" fill="#c8c8c8"><path d="M0 2h18v18H0zM20 10h8v20H8v-8h12z"/></svg></button>
                <button aria-label="Crop"><svg width="28" height="30" viewBox="0 0 28 30"><path d="M0 2h20v20H0z" fill="#666"/><path d="M8 10h20v20H8z" fill="#777"/><path d="M8 10h12v11H8z" fill="#ccc"/></svg></button>
                <button aria-label="Outline"><svg width="28" height="30" viewBox="0 0 28 30" fill="none" stroke="#ddd" stroke-width="2"><path d="M15 8V3H1v14h5M20 13h7v16H11v-7M9 12h8v7H9z"/></svg></button>
                <button aria-label="Minus back"><svg width="28" height="30" viewBox="0 0 28 30"><path d="M1 3h17v17H1z" fill="none" stroke="#888" stroke-width="2"/><path d="M19 8h6v19H7v-6h12z" fill="#888" stroke="#ddd" stroke-width="2"/></svg></button>
            </div>
        </div>
    </section>

    <!-- rotate dialog -->
    <form class="dialog" onsubmit="return false">
        <div class="dialog-title">Rotate</div>
        <div class="dialog-body">
            <fieldset>
                <legend>Rotate</legend>
                <div class="row angle">
                    <label for="angle">Angle:</label>
                    <svg width="68" height="68" viewBox="0 0 68 68"><circle cx="34" cy="34" r="33" fill="#5e5e5e" stroke="#ee8f38" stroke-width="2"/><path d="M34 34L61 19" stroke="#222" stroke-width="2"/><circle cx="34" cy="34" r="2" fill="#ee8f38"/></svg>
                    <input id="angle" type="text" value="30"><i class="caret"></i>
                </div>
                <div class="row options">
                    <span class="lbl">Options:</span>
                    <label class="check off"><input type="checkbox" checked disabled>Transform Objects</label>
                    <label class="check off"><input type="checkbox" disabled>Transform Patterns</label>
                </div>
            </fieldset>
            <label class="check"><input type="checkbox">Preview</label>
            <div class="buttons">
                <button type="button">Copy</button>
                <button type="button" class="cancel">Cancel</button>
                <button type="submit" class="ok">OK</button>
            </div>
        </div>
    </form>
</body>
</html>
```

FILE: styles.css
```
* {
    margin: 0;
    padding: 0;
    box-sizing: border-box;
}

body {
    font-family: 'Noto Sans', 'Noto Sans CJK TC', sans-serif;
    font-size: 20px;
    line-height: 24px;
    color: #e0e0e0;
    background: #06101c;
    height: 100vh;
    overflow: hidden;
    display: flex;
    flex-direction: column;
    position: relative;
    padding-bottom: 4px;
}

button, input, select {
    font: inherit;
    color: inherit;
    background: none;
    border: none;
    border-radius: 0;
    outline: none;
    appearance: none;
}

a {
    color: inherit;
    text-decoration: none;
}

svg {
    display: block;
    flex: none;
}

i {
    font-style: normal;
}

.defs {
    position: absolute;
    width: 0;
    height: 0;
}

.bare {
    display: flex;
    align-items: center;
    justify-content: center;
    gap: 4px;
}

/* triangles */
.tri {
    flex: none;
    width: 0;
    height: 0;
    border: 7px solid transparent;
    border-top: 12px solid #e2e2e2;
    border-bottom: none;
}

.tri.up {
    border-top: none;
    border-bottom: 12px solid #e2e2e2;
}

.tri.right {
    border: 7px solid transparent;
    border-left: 11px solid #e2e2e2;
    border-right: none;
}

.tri.left {
    border: 9px solid transparent;
    border-right: 12px solid #e2e2e2;
    border-left: none;
}

.tri.big {
    border-left-width: 9px;
    border-right-width: 9px;
}

.tri.small {
    border-width: 6px 5px 0;
}

.tri.white {
    border-top-color: #fff;
}

/* menu bar */
.menubar {
    height: 44px;
    flex: none;
    display: flex;
    align-items: center;
    padding: 0 32px 0 38px;
    background: linear-gradient(#c4fff0, #b4f2dc 50%, #96cdb9);
    border-bottom: 1px solid #3c6a5a;
    color: #0a0a0a;
    font-size: 28px;
    white-space: nowrap;
}

.menus {
    display: flex;
    gap: 38px;
    margin-left: 39px;
}

.app-name {
    font-weight: 700;
    font-size: 29px;
}

.tray {
    margin-left: auto;
    display: flex;
    align-items: center;
}

.vtext {
    font: 700 16px/12px 'Liberation Mono', monospace;
    color: #3f6b5d;
    width: 16px;
    margin-right: 16px;
    text-align: center;
}

.net {
    font-size: 19px;
    line-height: 18px;
    font-weight: 700;
    width: 76px;
    margin: 0 22px 0 32px;
}

.tray .net + .vtext,
.vtext.hdd {
    margin-right: 8px;
}

.meter {
    width: 17px;
    height: 34px;
    border: 2px solid #8fbfae;
    margin-right: 17px;
}

.meter-mem {
    background: linear-gradient(transparent 45%, #1a82dc 45%);
    margin-right: 24px;
}

.charged {
    width: 108px;
    margin: 0 26px 0 8px;
    font-size: 27px;
}

.wifi {
    margin: 0 18px 0 22px;
}

.flag {
    margin: 0 26px 0 34px;
}

.pct {
    font-size: 24px;
    width: 62px;
    margin-right: 8px;
}

.clock {
    width: 200px;
    margin: 0 36px 0 27px;
    font-size: 28px;
}

.list {
    margin-left: 30px;
}

/* window frame */
.app {
    flex: 1;
    min-height: 0;
    display: flex;
    flex-direction: column;
    background: #222;
    padding-top: 2px;
}

.appbar {
    height: 68px;
    flex: none;
    display: flex;
    align-items: center;
    padding: 0 6px 4px 16px;
    background: linear-gradient(#646464, #484848);
    border-top: 2px solid #777;
    border-bottom: 2px solid #222;
    border-radius: 10px 10px 0 0;
}

.light {
    width: 24px;
    height: 24px;
    border-radius: 50%;
    margin-right: 16px;
    border: 1px solid #444;
}

.red {
    background: radial-gradient(circle at 50% 50%, #7a1012 20%, #f56a68 32%, #e23c3c 60%, #ffb8b0 90%);
}

.amber {
    background: radial-gradient(circle at 50% 75%, #ffe9a4, #f4ab3e 60%, #c87d20);
}

.green {
    background: radial-gradient(circle at 50% 75%, #dcf6b4, #84c050 60%, #4f8f30);
}

.ai {
    font-size: 42px;
    font-weight: 500;
    line-height: 44px;
    color: #c08a62;
    width: 46px;
    margin-left: 22px;
}

.badge {
    width: 32px;
    height: 30px;
    border: 2px solid #f0f0f0;
    background: #222;
    color: #f0f0f0;
    font-size: 16px;
    line-height: 24px;
    font-weight: 700;
    margin-left: 36px;
}

.badge.dim {
    border-color: #8a8a8a;
    background: #3c3c3c;
    color: #8a8a8a;
    font-weight: 400;
}

.badge + .badge {
    margin-left: 40px;
}

.layout {
    margin: 0 32px 0 46px;
}

.appbar-right {
    margin-left: auto;
    display: flex;
    align-items: center;
    height: 44px;
    gap: 14px;
}

.essentials {
    height: 42px;
    width: 212px;
    padding-left: 26px;
    border-left: 2px solid #333;
    border-right: 2px solid #333;
    font-weight: 700;
    font-size: 24px;
    display: flex;
    align-items: center;
    gap: 20px;
    white-space: nowrap;
}

.app-search {
    display: flex;
    align-items: center;
    width: 260px;
    height: 38px;
    padding-left: 4px;
    border: 2px solid #222;
    background: #a0a0a0;
}

.app-search input {
    flex: 1;
    min-width: 0;
    color: #000;
}

/* control bar */
.control {
    height: 68px;
    flex: none;
    display: flex;
    align-items: center;
    padding: 0 28px 2px 8px;
    background: #4a4a4a;
    border-top: 2px solid #5c5c5c;
    border-bottom: 2px solid #222;
    font-weight: 500;
    white-space: nowrap;
}

.grip {
    width: 6px;
    height: 40px;
    background: repeating-linear-gradient(#111 0 2px, transparent 2px 4px);
}

.obj {
    width: 180px;
    height: 50px;
    margin: 0 14px 0 12px;
    line-height: 50px;
    border-right: 2px solid #3a3a3a;
}

.combo {
    display: flex;
    height: 38px;
    border: 2px solid #252525;
    background: #252525;
    gap: 2px;
    box-shadow: 0 0 0 1px #505050;
}

.combo input {
    flex: 1;
    min-width: 0;
    background: #a2a2a2;
    color: #000;
    padding-left: 6px;
}

.drop {
    flex: none;
    width: 28px;
    background: linear-gradient(#626262, #505050);
    display: flex;
    align-items: center;
    justify-content: center;
}

.chip {
    width: 34px;
    background: #e4e4e4;
    border: 2px solid #999;
    display: flex;
    align-items: center;
    justify-content: center;
}

.chip.black {
    background: #000;
    border-color: #fff;
}

.ring {
    width: 14px;
    height: 14px;
    border: 2px solid #fff;
    box-shadow: inset 0 0 0 2px #000, inset 0 0 0 4px #fff;
}

.strokebox {
    margin-left: 14px;
}

.control a {
    color: #f39a3c;
    border-bottom: 2px dotted #f39a3c;
    line-height: 22px;
}

.link-stroke {
    width: 68px;
    margin: 0 12px 0 26px;
}

.weight {
    width: 172px;
}

.weight input {
    padding-left: 4px;
}

.stepper {
    width: 32px;
    display: flex;
    flex-direction: column;
    gap: 2px;
}

.stepper button {
    flex: 1;
    display: flex;
    align-items: center;
    justify-content: center;
    background: #585858;
}

.stepper .tri {
    border-width: 0 6px 9px;
}

.stepper .tri:not(.up) {
    border-width: 9px 6px 0;
}

.profile {
    width: 212px;
    margin: 0 16px 0 14px;
}

.brush {
    width: 208px;
}

.line-pick {
    flex: 1;
    display: flex;
    align-items: center;
    gap: 10px;
    padding: 0 10px;
    background: #e4e4e4;
    border: 2px solid #999;
    color: #000;
}

.line-pick i {
    flex: 1;
    height: 4px;
    background: #000;
}

.link-opacity {
    width: 80px;
    margin: 0 12px 0 14px;
}

.opacity {
    width: 152px;
}

.style-label {
    width: 52px;
    margin: 0 12px;
}

.sep {
    width: 2px;
    height: 50px;
    background: #3a3a3a;
    flex: none;
}

.stylebox {
    margin-right: 14px;
}

.cell-74 {
    width: 74px;
}

.cell-96 {
    width: 96px;
}

.link-transform {
    width: 102px;
    margin: 0 12px 0 16px;
}

.isolate {
    margin: 0 28px 0 20px;
}

.similar {
    gap: 12px;
}

.control-menu {
    margin-left: auto;
}

/* work area */
.work {
    flex: 1;
    min-height: 0;
    display: flex;
    background: #333;
    padding-bottom: 2px;
}

.collapse {
    height: 24px;
    flex: none;
    padding: 6px 8px;
    background: linear-gradient(#333, #2a2a2a);
    border-top: 1px solid #4a4a4a;
    border-bottom: 2px solid #222;
    display: flex;
}

.collapse.right {
    justify-content: flex-end;
    padding: 4px 4px;
}

.tools,
.dock {
    box-shadow: 0 0 0 2px #222;
}

.tools {
    width: 140px;
    flex: none;
    background: #4a4a4a;
}

.tools-grip {
    height: 32px;
    border-top: 2px solid #606060;
    padding: 4px 0 0 50px;
}

.tools-grip i {
    display: block;
    width: 38px;
    height: 9px;
    background: repeating-linear-gradient(90deg, #0c0c0c 0 2px, transparent 2px 4px);
}

.tool-group {
    width: 120px;
    margin: 0 10px 1px;
    padding-bottom: 1px;
    border-bottom: 2px solid #333;
    display: flex;
    flex-wrap: wrap;
}

.tool-group button {
    width: 60px;
    height: 48px;
}

.tool-group svg {
    width: 60px;
    height: 48px;
}

.tool-group .on {
    background: linear-gradient(#2a2a2a, #2a2a2a) center / 56px 44px no-repeat;
}

.paint {
    padding: 4px 10px 10px;
}

.modes {
    display: flex;
    width: 118px;
    height: 38px;
    margin-left: 12px;
    border: 2px solid #222;
    background: #606060;
}

.modes button {
    flex: 1;
    display: flex;
    align-items: center;
    justify-content: center;
}

.modes .on {
    background: #2e2e2e;
}

.modes.draw {
    height: 34px;
    margin-top: 12px;
}

.screen {
    display: block;
    margin: 16px 0 0 46px;
}

/* document */
.doc {
    flex: 1;
    min-width: 0;
    display: flex;
    flex-direction: column;
    border-left: 2px solid #222;
    margin-left: 4px;
}

.doctabs {
    height: 40px;
    flex: none;
    display: flex;
    background: linear-gradient(#353535, #2c2c2c);
    border-top: 2px solid #444;
    border-bottom: 2px solid #222;
}

.doctab {
    display: flex;
    align-items: center;
    gap: 16px;
    padding-left: 18px;
    border-right: 2px solid #222;
    font-weight: 700;
    font-size: 21px;
    color: #a6a6a6;
    white-space: nowrap;
    text-shadow: 0 -1px 0 #1a1a1a;
}

.t1 {
    width: 411px;
}

.t2 {
    width: 482px;
}

.t3 {
    width: 468px;
}

.t4 {
    width: 484px;
}

.doctab.active {
    background: #4a4a4a;
    color: #f0f0f0;
}

.view {
    flex: 1;
    min-height: 0;
    display: flex;
}

.view-main {
    flex: 1;
    min-width: 0;
    display: flex;
    flex-direction: column;
}

.hruler {
    height: 32px;
    flex: none;
    display: flex;
    background: #292929;
}

.corner {
    width: 32px;
    flex: none;
    border-right: 2px solid #777;
    background:
        repeating-linear-gradient(90deg, #777 0 2px, transparent 2px 4px) 0 8px / 100% 2px no-repeat,
        repeating-linear-gradient(#777 0 2px, transparent 2px 4px) 8px 0 / 2px 100% no-repeat;
}

.hscale {
    flex: 1;
    min-width: 0;
    overflow: hidden;
}

/* the scale starts off screen so that 0 falls on the artboard edge */
.hticks {
    display: flex;
    width: 1995px;
    height: 32px;
    margin-left: -84px;
}

.hticks i {
    flex: 1;
    padding-left: 3px;
    border-left: 2px solid #777;
    font: 20px/26px 'DejaVu Sans', sans-serif;
    color: #aaa;
    background: linear-gradient(90deg, #777 2px, transparent 2px) -2px 100% / 20% 7px repeat-x;
    background-origin: border-box;
}

.stage {
    flex: 1;
    min-height: 0;
    display: flex;
}

.vruler {
    width: 32px;
    flex: none;
    overflow: hidden;
    background: #292929;
}

.vzero {
    height: 14px;
    border-bottom: 2px solid #777;
}

.vticks {
    display: flex;
    flex-direction: column;
    height: 1371px;
}

.vticks i {
    flex: 1;
    display: flex;
    align-items: flex-end;
    padding: 0 0 6px 4px;
    border-bottom: 2px solid #777;
    font: 20px/18px 'DejaVu Sans', sans-serif;
    color: #aaa;
    background: linear-gradient(0deg, #777 2px, transparent 2px) 100% 100% / 7px 20% repeat-y;
}

.canvas {
    flex: 1;
    min-width: 0;
    position: relative;
    background: #5d5d5d;
    overflow: hidden;
}

.artboard {
    position: absolute;
    left: 290px;
    top: 11px;
    width: 1248px;
    height: 1250px;
    background: #fff;
    border: 2px solid #000;
    box-shadow: 2px 4px 0 #525252;
}

.guide-v {
    position: absolute;
    left: 928px;
    top: 0;
    bottom: 0;
    width: 2px;
    background: #4ff;
}

.guide-h {
    position: absolute;
    left: 0;
    right: 0;
    top: 345px;
    height: 2px;
    background: #4ff;
}

.shape {
    position: absolute;
    left: 913px;
    top: 201px;
    width: 32px;
    height: 76px;
    background: #000;
    border: 2px solid #4f80ff;
}

.h {
    position: absolute;
    width: 10px;
    height: 10px;
    background: #4f80ff;
}

.tl {
    left: -6px;
    top: -6px;
}

.tr {
    right: -6px;
    top: -6px;
}

.bl {
    left: -6px;
    bottom: -6px;
}

.br {
    right: -6px;
    bottom: -6px;
}

.mid {
    left: 9px;
    top: 31px;
}

.vscroll {
    width: 34px;
    flex: none;
    display: flex;
    flex-direction: column;
    align-items: center;
    justify-content: space-between;
    padding: 12px 0;
    background: #333;
    border-left: 2px solid #222;
    border-right: 2px solid #222;
}

.vscroll .thumb {
    width: 100%;
    height: 32px;
    background: #8f8f8f;
}

/* status bar */
.status {
    height: 32px;
    flex: none;
    display: flex;
    background: #4a4a4a;
    border-top: 2px solid #3a3a3a;
}

.share {
    width: 68px;
}

.combo.flat {
    height: 30px;
    border-bottom: none;
}

.combo.flat input {
    padding: 6px 0 0 6px;
    line-height: 22px;
}

.zoom {
    width: 136px;
}

.page {
    width: 114px;
}

.pager {
    width: 85px;
    display: flex;
    align-items: center;
    justify-content: center;
}

.status-text {
    width: 400px;
    border-left: 2px solid #3a3a3a;
    border-right: 2px solid #3a3a3a;
    text-align: center;
    padding-top: 7px;
    font-weight: 500;
}

.status-more {
    width: 37px;
}

.hscroll {
    flex: 1;
    display: flex;
    align-items: center;
    justify-content: space-between;
    background: #333;
    border: 2px solid #222;
    border-width: 0 2px;
    padding: 0 10px;
}

.hscroll .thumb {
    width: 30px;
    height: 100%;
    background: #8f8f8f;
}

.resize {
    width: 34px;
}

/* dock */
.dock {
    width: 476px;
    flex: none;
    margin-left: 4px;
    display: flex;
    flex-direction: column;
    background: #222;
    overflow: hidden;
}

.panel {
    background: #4a4a4a;
    position: relative;
    flex: none;
    margin-bottom: 6px;
    box-shadow: 0 3px 0 1px #333;
}

.tabs {
    display: flex;
    height: 36px;
    background: linear-gradient(#353535, #2c2c2c);
    border-top: 2px solid #444;
    box-shadow: inset 0 -2px 0 #5e5e5e, inset 0 -4px 0 #222;
    overflow: hidden;
}

.tabs button {
    height: 30px;
    padding: 0 14px;
    border-right: 2px solid #222;
    font-weight: 700;
    line-height: 28px;
    color: #a0a0a0;
    white-space: nowrap;
    overflow: hidden;
    flex: none;
    text-shadow: 0 -1px 0 #1a1a1a;
}

.tabs .active {
    height: 34px;
    padding-bottom: 4px;
    background: #4a4a4a;
    color: #f0f0f0;
}

.tabs .updown {
    display: flex;
    align-items: center;
    gap: 4px;
    padding: 0 12px 4px 9px;
}

.pmenu {
    margin: 7px 4px 0 auto;
}

.swatches {
    height: 432px;
}

.sw-top {
    display: flex;
    justify-content: space-between;
    padding: 10px 8px 10px 10px;
}

.viewpick {
    display: flex;
    width: 102px;
    height: 44px;
    margin-top: 2px;
    border: 2px solid #222;
    background: #606060;
}

.viewpick button {
    flex: 1;
    display: flex;
    align-items: center;
    justify-content: center;
}

.viewpick .on {
    background: #2b2b2b;
}

.sw-box {
    display: flex;
    height: 278px;
    margin: 0 6px 0 10px;
    border: 2px solid #252525;
}

.sw-list {
    flex: 1;
}

.sw-row {
    display: flex;
    flex-wrap: wrap;
    gap: 2px;
    width: 420px;
}

.sw-row i {
    width: 26px;
    height: 26px;
    box-shadow: 0 0 0 2px #5c5c5c;
}

.sw-row .picked {
    border: 2px solid #fff;
    box-shadow: none;
}

.sw-row.group {
    margin-top: 6px;
}

.sw-scroll {
    width: 26px;
    border-left: 2px solid #252525;
    background: #333;
    display: flex;
    flex-direction: column;
    align-items: center;
    justify-content: space-between;
    padding: 8px 0;
}

.sw-scroll .tri {
    border-top-color: #777;
}

.sw-scroll .up {
    border-bottom-color: #777;
}

.icons {
    display: flex;
    align-items: center;
    color: #c8c8c8;
}

.sw-icons {
    height: 38px;
    justify-content: space-between;
    padding: 0 52px 0 16px;
}

.corner-grip {
    position: absolute;
    right: 0;
    bottom: 4px;
}

.gradient {
    height: 466px;
}

.grad-body {
    display: flex;
    padding: 12px 8px 0 12px;
}

.grad-left {
    width: 82px;
}

.grad-pick {
    display: flex;
    align-items: center;
    gap: 8px;
    margin-bottom: 12px;
}

.grad-thumb {
    width: 60px;
    height: 60px;
    border: 2px solid #252525;
    background: linear-gradient(90deg, #fff, #111);
}

.reverse {
    margin: 20px 0 0 14px;
}

.grad-form {
    flex: 1;
    display: grid;
    grid-template-columns: 1fr 282px;
    grid-auto-rows: 38px;
    gap: 15px 9px;
    align-items: center;
    color: #8a8a8a;
    font-weight: 500;
}

.grad-form label,
.grad-form .name {
    justify-self: end;
}

.grad-form .pic {
    padding-right: 4px;
}

.grad-form .lit {
    color: #f0f0f0;
}

.grad-form .combo {
    width: 152px;
}

.combo.off {
    border-color: #303030;
    background: #303030;
}

.combo.off input {
    background: #777;
}

.combo.off .drop {
    background: #6c6c6c;
}

.combo.off .tri {
    border-top-color: #999;
}

.pick {
    position: relative;
    height: 38px;
    border: 2px solid #252525;
    background: linear-gradient(#666, #525252);
}

.pick select {
    width: 100%;
    height: 100%;
    padding-left: 20px;
    color: #fff;
}

.pick .tri {
    position: absolute;
    right: 10px;
    top: 11px;
    pointer-events: none;
}

.bars {
    position: absolute;
    right: 32px;
    top: 4px;
    width: 6px;
    height: 24px;
    border: 2px solid #777;
    border-width: 0 2px;
    background: #333;
}

.trio {
    display: flex;
    width: 140px;
    height: 40px;
    border: 2px solid #333;
    background: #505050;
}

.trio button {
    flex: 1;
    display: flex;
    align-items: center;
    justify-content: center;
}

.trio button + button {
    border-left: 2px solid #333;
}

.grad-bar {
    display: flex;
    align-items: center;
    gap: 23px;
    padding: 27px 18px 0 20px;
}

.grad-bar i {
    flex: 1;
    height: 38px;
    border: 2px solid #252525;
    background: linear-gradient(90deg, #fff, #999 50%, #444 88%, #000);
}

.grad-form.lower {
    padding: 54px 8px 0 0;
}

.libraries {
    height: 432px;
    display: flex;
    flex-direction: column;
}

.cut-a {
    width: 134px;
}

.cut-b {
    width: 150px;
}

.tabs .cut-a,
.tabs .cut-b {
    padding: 0 0 0 12px;
    text-align: left;
}

.lib-row {
    display: flex;
    padding: 8px 24px 0 16px;
}

.pick.lib {
    flex: 1;
    height: 36px;
}

.lib-grid {
    width: 42px;
    height: 36px;
    margin: 0 14px;
    background: #222;
    display: flex;
    align-items: center;
    justify-content: center;
}

.lib-search {
    display: flex;
    align-items: center;
    flex: none;
    height: 48px;
    margin: 10px 12px 10px 16px;
    border: 2px solid #252525;
    background: #a0a0a0;
    padding-left: 4px;
}

.lib-search input {
    flex: 1;
    min-width: 0;
    padding-left: 8px;
    font-size: 21px;
    color: #222;
}

.lib-search input::placeholder {
    color: #666;
}

.lib-search button {
    width: 40px;
    height: 44px;
    background: #4a4a4a;
    display: flex;
    align-items: center;
    justify-content: center;
}

.lib-body {
    flex: 1;
    min-height: 0;
    display: flex;
    border-top: 2px solid #252525;
    background: #444;
}

.lib-content {
    flex: 1;
    padding: 22px 20px 0 30px;
    overflow: hidden;
    text-align: center;
}

.lib-content h2 {
    font-size: 29px;
    line-height: 32px;
    color: #fff;
    white-space: nowrap;
}

.card {
    margin-top: 20px;
    height: 200px;
    padding: 22px 18px;
    border-radius: 6px;
    background: #555;
    font-size: 23px;
    line-height: 30px;
    color: #d0d0d0;
}

.card a {
    display: block;
    margin-top: 6px;
    color: #fff;
    font-weight: 700;
    text-decoration: underline;
    white-space: nowrap;
}

.lib-scroll {
    width: 24px;
    border-left: 2px solid #252525;
    background: #333;
    display: flex;
    flex-direction: column;
    align-items: center;
    padding: 8px 0 6px;
    overflow: hidden;
}

.lib-scroll .thumb {
    width: 100%;
    height: 76px;
    margin: 10px 0 auto;
    background: #8f8f8f;
}

.lib-icons {
    height: 48px;
    flex: none;
    padding: 0 18px 0 20px;
    gap: 25px;
    border-top: 2px solid #5c5c5c;
}

.glyph {
    font-size: 34px;
    line-height: 34px;
    color: #888;
    width: 22px;
    display: flex;
    justify-content: center;
}

.icons .cc {
    margin-left: auto;
}

.layers {
    margin-bottom: 0;
}

/* floating panel */
.pathfinder {
    position: absolute;
    left: 1454px;
    top: 214px;
    width: 484px;
    height: 272px;
    border: 2px solid #222;
    border-radius: 8px 8px 0 0;
    background: #4a4a4a;
    box-shadow: 0 4px 12px rgba(0, 0, 0, 0.4);
    overflow: hidden;
}

.float-head {
    height: 26px;
    display: flex;
    align-items: center;
    justify-content: space-between;
    padding: 0 10px;
    background: linear-gradient(#383838, #2a2a2a);
    border-bottom: 2px solid #222;
}

.pathfinder .tabs button {
    padding-left: 15px;
    padding-right: 15px;
}

.pf-body {
    padding: 12px 12px 0 10px;
    font-weight: 500;
}

.pf-body p {
    color: #e8e8e8;
}

.pf-modes {
    display: flex;
    align-items: center;
    height: 34px;
    margin: 18px 0 22px 12px;
    gap: 50px;
}

.expand {
    flex: 1;
    margin-left: -10px;
    height: 34px;
    border: 2px solid #333;
    background: #525252;
    color: #888;
    line-height: 28px;
}

.pf-ops {
    display: flex;
    gap: 50px;
    margin: 20px 0 0 20px;
}

/* dialog */
.dialog {
    position: absolute;
    left: 910px;
    top: 548px;
    width: 740px;
    border-radius: 10px;
    background: #4a4a4a;
    box-shadow: 0 0 0 1px rgba(0, 0, 0, 0.25), 0 36px 100px rgba(0, 0, 0, 0.75);
    font-size: 24px;
    font-weight: 500;
    line-height: 30px;
    color: #e4e4e4;
}

.dialog-title {
    height: 44px;
    line-height: 44px;
    text-align: center;
    font-size: 26px;
    font-weight: 400;
    color: #3a3a3a;
    border-radius: 10px 10px 0 0;
    background: linear-gradient(#e8e8e8, #b4b4b4);
    border-bottom: 2px solid #666;
}

.dialog-body {
    padding: 46px 32px 60px;
}

.dialog fieldset {
    border: 2px solid #252525;
    height: 206px;
    padding: 0 0 0 15px;
}

.dialog legend {
    margin-left: -7px;
    padding: 0 8px;
}

.row {
    display: flex;
    align-items: center;
}

.angle {
    margin-top: 24px;
    height: 70px;
}

.angle label,
.lbl {
    width: 99px;
    margin-right: 10px;
    text-align: right;
}

.angle input {
    width: 130px;
    height: 36px;
    margin-left: 14px;
    padding-left: 6px;
    background: #a2a2a2;
    border: 2px solid #252525;
    outline: 2px solid #ee8f38;
    color: #000;
}

.caret {
    width: 2px;
    height: 28px;
    margin-left: -92px;
    background: #000;
}

.options {
    margin-top: 22px;
}

.check {
    display: flex;
    align-items: center;
    gap: 8px;
    white-space: nowrap;
}

.check.off {
    color: #808080;
    width: 273px;
    flex: none;
}

.check input {
    width: 24px;
    height: 24px;
    flex: none;
    border: 2px solid #252525;
    background: linear-gradient(#5e5e5e, #505050);
    position: relative;
}

.check.off input {
    border-color: #333;
    background: #4f4f4f;
}

.check input:checked::after {
    content: "";
    position: absolute;
    left: 7px;
    top: -4px;
    width: 7px;
    height: 15px;
    border: solid #a0a0a0;
    border-width: 0 4px 4px 0;
    transform: rotate(38deg);
}

.dialog-body > .check {
    margin-top: 22px;
}

.buttons {
    display: flex;
    align-items: center;
    gap: 12px;
    margin-top: 45px;
}

.buttons button {
    width: 180px;
    height: 48px;
    border: 2px solid #252525;
    background: linear-gradient(#646464, #4f4f4f);
    box-shadow: inset 0 0 0 1px #666;
}

.buttons .cancel {
    margin-left: auto;
}

.buttons .ok {
    border-width: 4px;
    width: 182px;
    height: 52px;
}
```
